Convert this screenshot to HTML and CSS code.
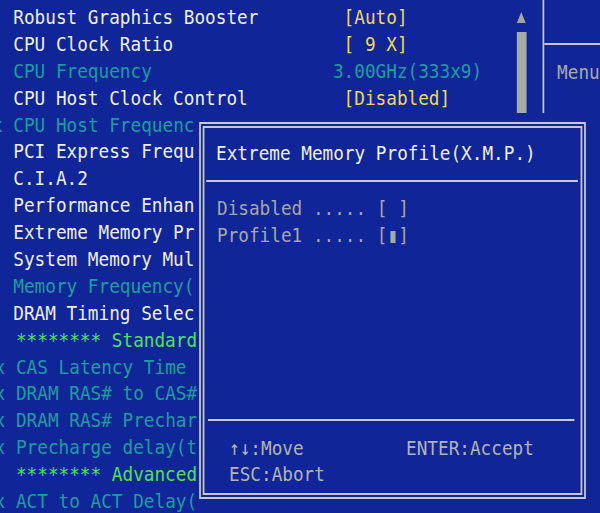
FILE: index.html
```html
<!DOCTYPE html>
<html lang="en">
<head>
<meta charset="utf-8">
<title>BIOS - Extreme Memory Profile</title>
<link rel="stylesheet" href="styles.css">
</head>
<body>
<div class="screen">
  <div class="menu">
    <div class="row white"><span class="label">Robust Graphics Booster</span><span class="value yellow">[Auto]</span></div>
    <div class="row white"><span class="label">CPU Clock Ratio</span><span class="value yellow">[ 9 X]</span></div>
    <div class="row cyan"><span class="label">CPU Frequency</span><span class="value early">3.00GHz(333x9)</span></div>
    <div class="row white"><span class="label">CPU Host Clock Control</span><span class="value yellow">[Disabled]</span></div>
    <div class="row cyan"><span class="mark">x </span><span class="label">CPU Host Frequenc</span></div>
    <div class="row white"><span class="label">PCI Express Frequ</span></div>
    <div class="row white"><span class="label">C.I.A.2</span></div>
    <div class="row white"><span class="label">Performance Enhan</span></div>
    <div class="row white"><span class="label">Extreme Memory Pr</span></div>
    <div class="row white"><span class="label">System Memory Mul</span></div>
    <div class="row cyan"><span class="label">Memory Frequency(</span></div>
    <div class="row white"><span class="label">DRAM Timing Selec</span></div>
    <div class="row green lower"><span class="label">******** Standard</span></div>
    <div class="row cyan lower"><span class="mark">x </span><span class="label">CAS Latency Time</span></div>
    <div class="row cyan lower"><span class="mark">x </span><span class="label">DRAM RAS# to CAS#</span></div>
    <div class="row cyan lower"><span class="mark">x </span><span class="label">DRAM RAS# Prechar</span></div>
    <div class="row cyan lower"><span class="mark">x </span><span class="label">Precharge delay(t</span></div>
    <div class="row green lower"><span class="label">******** Advanced</span></div>
    <div class="row cyan lower"><span class="mark">x </span><span class="label">ACT to ACT Delay(</span></div>
  </div>

  <div class="scroll">
    <div class="arrow"></div>
    <div class="thumb"></div>
  </div>

  <div class="help">
    <div class="help-title"></div>
    <div class="help-text">Menu Level</div>
  </div>

  <div class="popup">
    <div class="popup-head">Extreme Memory Profile(X.M.P.)</div>
    <div class="popup-body">
      <div class="option">Disabled ..... [ ]</div>
      <div class="option">Profile1 ..... [<span class="sel">▮</span>]</div>
    </div>
    <div class="popup-foot">
      <span class="key">↑↓:Move</span>
      <span class="key">ENTER:Accept</span>
      <span class="key">ESC:Abort</span>
    </div>
  </div>
</div>
</body>
</html>
```

FILE: styles.css
```css
html, body {
  margin: 0;
  padding: 0;
  background: #0f2598;
  overflow: hidden;
}

body {
  width: 600px;
  height: 513px;
}

.screen {
  position: relative;
  display: flex;
  align-items: flex-start;
  width: 678px;
  height: 513px;
  overflow: hidden;
  transform: scaleX(0.885);
  transform-origin: 0 0;
  font-family: "DejaVu Sans Mono", "Liberation Mono", monospace;
  font-size: 20px;
  color: #efeee6;
}

/* main menu list */
.menu {
  flex: none;
  width: 583px;
  box-sizing: border-box;
  padding: 4px 0 0 15px;
}

.row {
  display: flex;
  height: 26.9px;
  line-height: 26.9px;
  white-space: pre;
}

.row.lower {
  padding-left: 3px;
}

.row .label {
  width: 31ch;
  flex: none;
}

.row .mark {
  margin-left: -2ch;
}

.row .value.early {
  margin-left: -1ch;
}

.white { color: #efeee6; }
.cyan { color: #1c9e9e; }
.green { color: #4ee25a; }
.yellow { color: #f2d65c; }

/* scrollbar */
.scroll {
  flex: none;
  width: 12.5px;
  display: flex;
  flex-direction: column;
  align-items: center;
  padding-top: 12px;
}

.arrow {
  width: 0;
  height: 0;
  border-left: 5px solid transparent;
  border-right: 5px solid transparent;
  border-bottom: 11px solid #a4a6a4;
}

.thumb {
  width: 11px;
  height: 81px;
  margin-top: 9px;
  background: #a9aaa6;
}

/* item help panel */
.help {
  flex: none;
  width: 66px;
  height: 113px;
  margin-left: 17px;
  border-left: 2px solid #c6c8c8;
}

.help-title {
  height: 43px;
  border-bottom: 2px solid #c6c8c8;
}

.help-text {
  margin-top: 13.5px;
  padding-left: 15px;
  line-height: 27px;
  white-space: nowrap;
  color: #a9abab;
}

/* popup dialog */
.popup {
  position: absolute;
  left: 224.9px;
  top: 122px;
  width: 437.3px;
  height: 377px;
  box-sizing: border-box;
  border: 6px double #c8c9c8;
  background: #0f2598;
  display: flex;
  flex-direction: column;
}

.popup-head {
  margin: 0 3px 0 2px;
  padding: 11.5px 0 13.5px 11.2px;
  line-height: 27px;
  white-space: pre;
  border-bottom: 2px solid #c8c9c8;
  color: #f0efe8;
}

.popup-body {
  flex: 1;
  padding: 12.5px 0 0 14.3px;
}

.option {
  line-height: 27px;
  white-space: pre;
  color: #a7a8a4;
}

.sel {
  color: #a7a8a4;
}

.popup-foot {
  display: grid;
  grid-template-columns: 200px auto;
  margin: 0 7px 0 4px;
  padding: 13.7px 0 6.3px 23.9px;
  border-top: 2px solid #c8c9c8;
  line-height: 26px;
  color: #b3b4b0;
}

.key {
  white-space: pre;
}
```
